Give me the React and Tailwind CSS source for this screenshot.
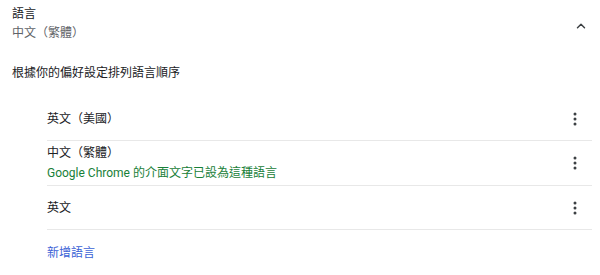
import { ChevronUp } from "lucide-react";

function Kebab() {
      return (
            <svg width="4" height="14" viewBox="0 0 4 14" className="text-[#3c4043]">
                  <circle cx="2" cy="2" r="1.5" fill="currentColor" />
                  <circle cx="2" cy="7" r="1.5" fill="currentColor" />
                  <circle cx="2" cy="12" r="1.5" fill="currentColor" />
            </svg>
      );
}

function LangRow({ name, note, last }) {
      return (
            <div className={`flex items-center justify-between pr-[15px] ${note ? "h-[45px]" : "h-[44px]"} ${last ? "" : "border-b border-[#e8e8e8]"}`}>
                  <div className="flex flex-col gap-[6px]">
                        <span className="text-[#202124]">{name}</span>
                        {note && <span className="text-[#188038]">{note}</span>}
                  </div>
                  <Kebab />
            </div>
      );
}

export default function App() {
      return (
            <div className="w-[600px] h-[275px] bg-white text-[12px] leading-[14px] overflow-hidden" style={{ fontFamily: 'Roboto, "Noto Sans CJK TC", sans-serif' }}>
                  <div className="flex items-start justify-between pl-[12px] pr-[12px] pt-[7px]">
                        <div className="flex flex-col gap-[5px]">
                              <span className="text-[#202124]">語言</span>
                              <span className="text-[#5f6368]">中文（繁體）</span>
                        </div>
                        <ChevronUp className="w-[14px] h-[14px] mt-[12px] text-[#3c4043]" strokeWidth={2.5} />
                  </div>

                  <div className="pl-[12px] mt-[26px] text-[#202124]">根據你的偏好設定排列語言順序</div>

                  <div className="ml-[47px] mr-[8px] mt-[17px] flex flex-col">
                        <LangRow name="英文（美國）" />
                        <LangRow name="中文（繁體）" note="Google Chrome 的介面文字已設為這種語言" />
                        <LangRow name="英文" />
                        <div className="pt-[16px] text-[#3b62d6]">新增語言</div>
                  </div>
            </div>
      );
}
